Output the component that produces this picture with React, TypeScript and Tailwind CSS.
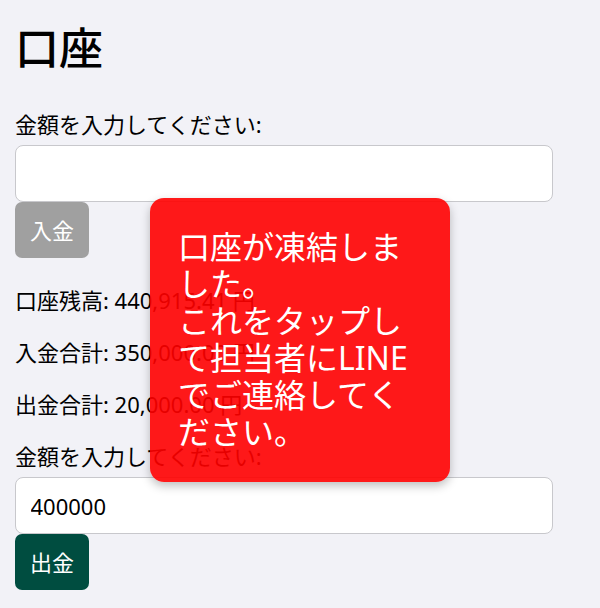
import React from "react";

export default function App() {
  return (
    <div
      className="relative min-h-[608px] w-[600px] overflow-hidden bg-[#f2f2f7] pl-[15px] text-black"
      style={{ fontFamily: '"Noto Sans", "Noto Sans CJK JP", sans-serif' }}
    >
      <h1 className="pt-[17px] text-[44px] font-medium leading-[62px]">口座</h1>

      <label className="mt-[29.5px] block text-[22px] leading-[31px]">
        金額を入力してください:
      </label>
      <input
        type="text"
        className="mt-[5.5px] block h-[57px] w-[538px] rounded-[8px] border-[1.33px] border-[#c8c8cc] bg-white px-[14.5px] text-[22px] outline-none"
      />
      <button className="block h-[56px] w-[74px] rounded-[7px] bg-[#a0a0a0] text-[22px] leading-[31px] text-white">
        入金
      </button>

      <p className="mt-[26.5px] text-[22px] leading-[31px]">口座残高: 440,915.41 円</p>
      <p className="mt-[21.33px] text-[22px] leading-[31px]">入金合計: 350,000.00 円</p>
      <p className="mt-[21.33px] text-[22px] leading-[31px]">出金合計: 20,000.00 円</p>

      <label className="mt-[21.33px] block text-[22px] leading-[31px]">
        金額を入力してください:
      </label>
      <input
        type="text"
        defaultValue="400000"
        className="mt-[4.6px] block h-[57px] w-[538px] rounded-[8px] border-[1.33px] border-[#c8c8cc] bg-white px-[14.5px] text-[22px] text-black outline-none"
      />
      <button className="block h-[56px] w-[74px] rounded-[7px] bg-[#004d40] text-[22px] leading-[31px] text-white">
        出金
      </button>

      <div className="absolute left-[150px] top-[198px] h-[284px] w-[300px] rounded-[14px] bg-[rgba(255,0,0,0.9)] py-[30px] pl-[28px] pr-[20px] text-[32px] leading-[37px] text-white shadow-[0_4px_10px_rgba(0,0,0,0.25)]">
        口座が凍結しま<br />
        した。<br />
        これをタップし<br />
        て担当者にLINE<br />
        でご連絡してく<br />
        ださい。
      </div>
    </div>
  );
}
